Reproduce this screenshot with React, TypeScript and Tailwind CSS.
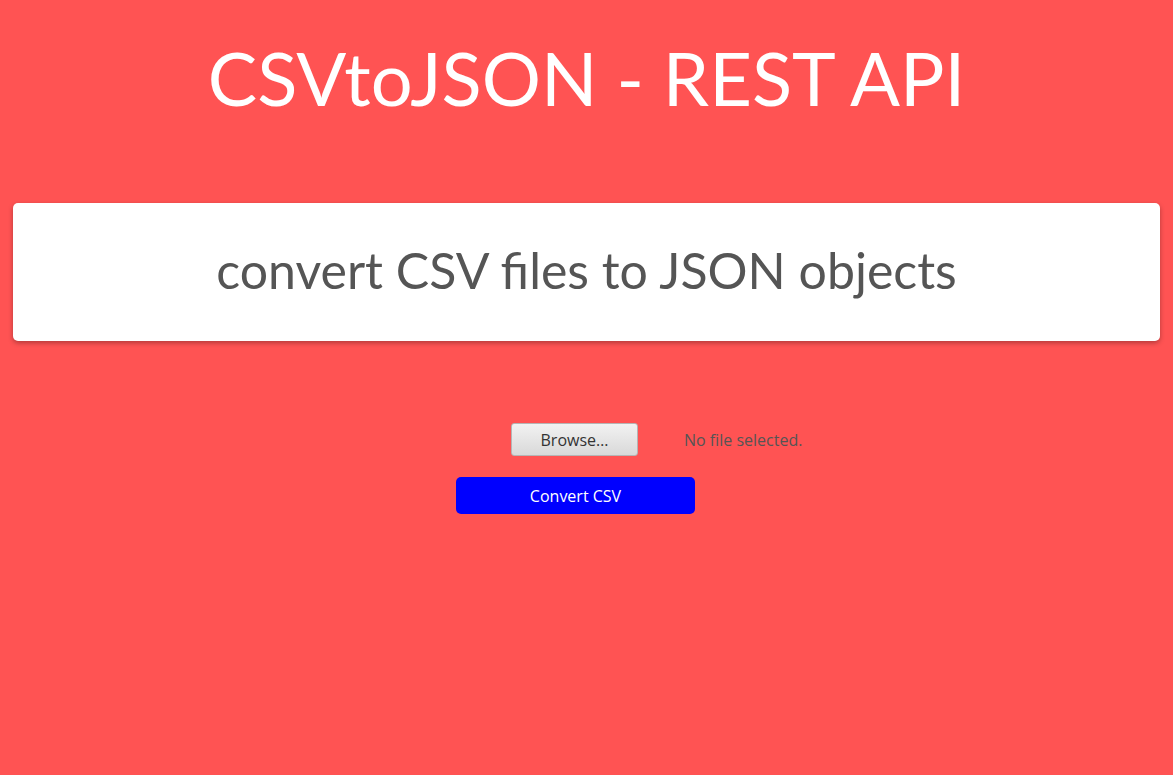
import React from "react";

export default function App() {
  return (
    <div className="min-h-[775px] w-full bg-[#ff5353] flex flex-col items-center">
      <h1 className="mt-[30px] text-white text-[74px] leading-[96px] font-normal text-center font-['Lato',sans-serif] whitespace-nowrap">
        CSVtoJSON - REST API
      </h1>
      <div className="mt-[77px] mx-[13px] self-stretch h-[138px] bg-white rounded-[5px] shadow-[0_2px_5px_rgba(0,0,0,0.3)] flex items-center justify-center">
        <h2 className="text-[#555555] text-[50px] font-normal font-['Lato',sans-serif] whitespace-nowrap -mt-[4px]">convert CSV files to JSON objects</h2>
      </div>
      <div className="mt-[82px] mr-[22px] w-[239px] flex flex-col items-start font-['Open_Sans',sans-serif]">
        <div className="flex items-center ml-[55px] whitespace-nowrap">
          <div className="w-[127px] h-[33px] shrink-0 border border-[#b5b5b5] rounded-[3px] bg-gradient-to-b from-[#f2f2f2] to-[#d9d9d9] flex items-center justify-center text-[16px] text-[#333]">
            Browse…
          </div>
          <span className="ml-[46px] text-[16px] text-[#555]">No file selected.</span>
        </div>
        <button className="mt-[21px] w-[239px] h-[37px] bg-[#0000ff] rounded-[5px] text-white text-[16px]">Convert CSV</button>
      </div>
    </div>
  );
}
